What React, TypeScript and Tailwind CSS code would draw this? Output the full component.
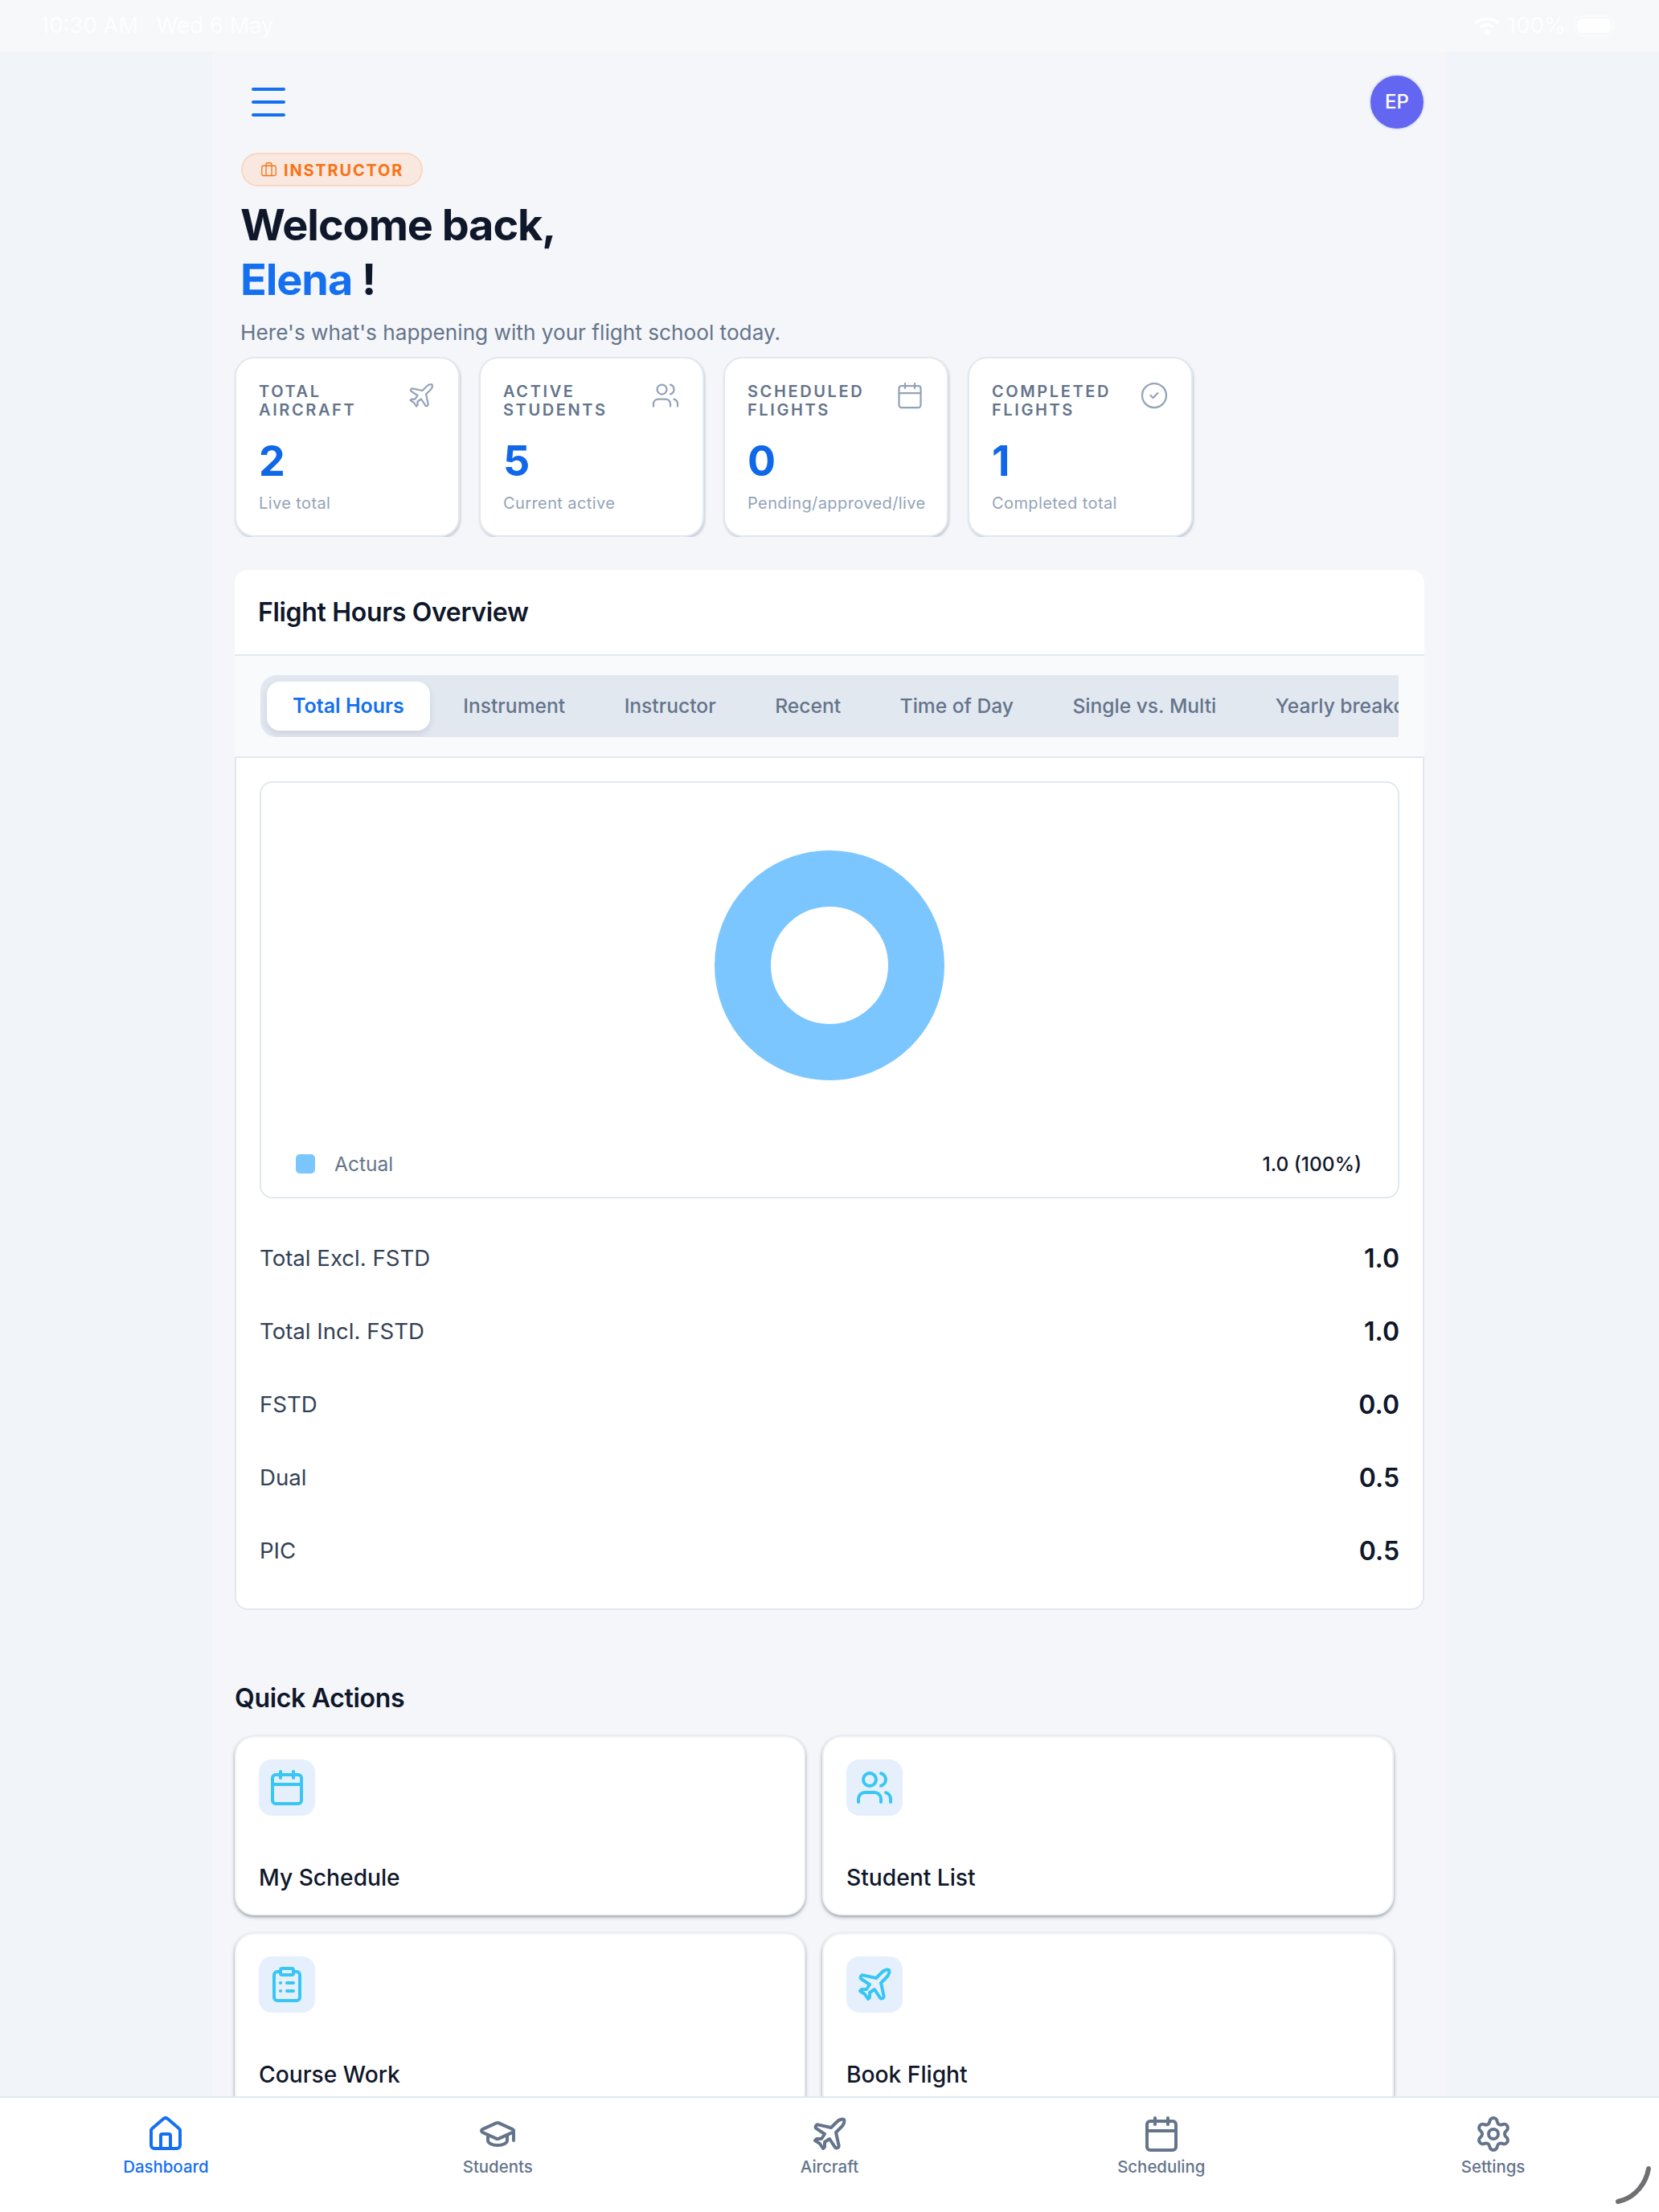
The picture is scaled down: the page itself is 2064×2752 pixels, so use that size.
import { Briefcase, Calendar, CircleCheck, ClipboardList, GraduationCap, House, Plane, Settings, Users } from "lucide-react";

const font = { fontFamily: "Inter, 'Noto Sans', sans-serif" };

const stats = [
  { l1: "TOTAL", l2: "AIRCRAFT", v: "2", s: "Live total", I: Plane },
  { l1: "ACTIVE", l2: "STUDENTS", v: "5", s: "Current active", I: Users },
  { l1: "SCHEDULED", l2: "FLIGHTS", v: "0", s: "Pending/approved/live", I: Calendar },
  { l1: "COMPLETED", l2: "FLIGHTS", v: "1", s: "Completed total", I: CircleCheck },
];

const tabs = ["Instrument", "Instructor", "Recent", "Time of Day", "Single vs. Multi", "Yearly breakdown"];

const rows = [
  ["Total Excl. FSTD", "1.0"],
  ["Total Incl. FSTD", "1.0"],
  ["FSTD", "0.0"],
  ["Dual", "0.5"],
  ["PIC", "0.5"],
];

const actions = [
  { t: "My Schedule", I: Calendar },
  { t: "Student List", I: Users },
  { t: "Course Work", I: ClipboardList },
  { t: "Book Flight", I: Plane },
];

const nav = [
  { t: "Dashboard", I: House, on: true },
  { t: "Students", I: GraduationCap, on: false },
  { t: "Aircraft", I: Plane, on: false },
  { t: "Scheduling", I: Calendar, on: false },
  { t: "Settings", I: Settings, on: false },
];

export default function App() {
  return (
    <div style={font} className="w-[2064px] h-[2752px] flex flex-col overflow-hidden bg-[#f1f4f9] relative">
      <div className="h-[64px] shrink-0 bg-[#f7f8fa] flex items-center justify-between pl-[50px] pr-[56px] text-white text-[27.5px] leading-none">
        <div className="flex gap-[22px] opacity-90">
          <span>10:30 AM</span>
          <span>Wed 6 May</span>
        </div>
        <div className="flex items-center gap-[10px] opacity-90">
          <svg width="30" height="24" viewBox="0 0 30 24" fill="none" stroke="#ffffff" strokeWidth="4" strokeLinecap="round">
            <path d="M2 8c7-6 19-6 26 0" />
            <path d="M8 13c4-3 10-3 14 0" />
            <circle cx="15" cy="20" r="1.5" fill="#ffffff" />
          </svg>
          <span>100%</span>
          <div className="w-[50px] h-[26px] rounded-[9px] border-2 border-white/50 p-[2px]">
            <div className="w-full h-full rounded-[6px] bg-white" />
          </div>
        </div>
      </div>

      <div className="flex-1 min-h-0 overflow-hidden">
        <div className="w-[1536px] mx-auto bg-[#f5f6f9] px-[28px] pt-[28px] h-full">
          <div className="flex items-center justify-between h-[70px] pl-[20px]">
            <svg width="44" height="36" viewBox="0 0 44 36" fill="none" stroke="#1570ef" strokeWidth="4" strokeLinecap="round">
              <path d="M3 2h38M3 18h38M3 34h38" />
            </svg>
            <div className="w-[70px] h-[70px] mr-[-1px] rounded-full bg-[#6366f1] border-2 border-[#e2e8f0] flex items-center justify-center text-white text-[24px] font-medium">
              EP
            </div>
          </div>

          <div className="pl-[8px]">
            <div className="mt-[28px] w-[226px] h-[42px] rounded-full bg-[#f8e8e0] border-2 border-[#fad7c0] flex items-center pl-[22px] gap-[8px]">
              <Briefcase size={21} strokeWidth={1.5} className="text-[#f97316]" />
              <span className="text-[#f97316] text-[20px] font-bold tracking-[0.09em] leading-none mt-[2px]">INSTRUCTOR</span>
            </div>
            <h1 className="mt-[14px] -ml-[1px] text-[54px] leading-[68px] font-bold tracking-[-0.02em] text-[#0f172a]">
              Welcome back,
              <br />
              <span className="text-[#1570ef]">Elena</span> !
            </h1>
            <p className="mt-[12px] -ml-[1px] text-[26.2px] leading-[40px] text-[#64748b]">Here's what's happening with your flight school today.</p>
          </div>

          <div className="-ml-[6px] pl-[6px] -mt-[2px] pt-[12px] pr-[6px] overflow-hidden flex gap-[24px] h-[236px] items-start">
            {stats.map((c) => (
              <div key={c.l1} className="w-[280px] h-[224px] shrink-0 rounded-[24px] bg-white border-2 border-[#e2e8f0] shadow-[1px_2px_3px_rgba(100,116,139,0.35)] px-[28px] pt-[30px]">
                <div className="flex justify-between items-start">
                  <div className="text-[20px] leading-[23px] font-semibold tracking-[0.13em] text-[#64748b]">
                    {c.l1}
                    <br />
                    {c.l2}
                  </div>
                  <c.I size={36} strokeWidth={1.5} className="text-[#94a3b8] -mt-[2px] shrink-0" />
                </div>
                <div className="mt-[20px] text-[52px] leading-[64px] font-bold text-[#1068e8]">{c.v}</div>
                <div className="mt-[6px] text-[20px] leading-[28px] tracking-[0.02em] text-[#94a3b8]">{c.s}</div>
              </div>
            ))}
          </div>

          <div className="mt-[41px] rounded-[16px] bg-white">
            <div className="h-[107px] border-b-2 border-[#e2e8f0] flex items-center pl-[29px]">
              <h2 className="text-[32px] font-semibold text-[#0f172a] tracking-[-0.01em]">Flight Hours Overview</h2>
            </div>
            <div className="h-[127px] border-b-2 border-[#e2e8f0] bg-[#f8fafc] px-[32px] pt-[24px]">
              <div className="h-[77px] bg-[#e2e8f0] rounded-l-[20px] flex items-center gap-[9.5px] pl-[8px] overflow-hidden">
                <div className="h-[61px] shrink-0 rounded-[16px] bg-white px-[32px] flex items-center text-[25px] font-semibold text-[#1570ef] shadow-[0_4px_10px_rgba(15,23,42,0.1)]">
                  Total Hours
                </div>
                {tabs.map((t) => (
                  <div key={t} className="h-[61px] shrink-0 px-[32px] flex items-center text-[24.6px] font-medium text-[#64748b]">
                    {t}
                  </div>
                ))}
              </div>
            </div>
            <div className="border-2 border-t-0 border-[#e2e8f0] rounded-b-[16px] px-[29px] pt-[29px] pb-[26px]">
              <div className="h-[519px] rounded-[16px] border-2 border-[#e2e8f0] flex flex-col pt-[84px]">
                <svg width="286" height="286" viewBox="0 0 286 286" className="self-center shrink-0">
                  <circle cx="143" cy="143" r="108" fill="none" stroke="#7cc6ff" strokeWidth="70" />
                </svg>
                <div className="mt-[89px] h-[30px] flex items-center justify-between pl-[43px] pr-[45px] text-[24.5px]">
                  <div className="flex items-center gap-[24px] text-[#64748b]">
                    <span className="w-[24px] h-[24px] rounded-[5px] bg-[#7cc6ff]" />
                    <span>Actual</span>
                  </div>
                  <span className="font-medium text-[#0f172a]">1.0 (100%)</span>
                </div>
              </div>
              <div className="mt-[29px]">
                {rows.map(([a, b]) => (
                  <div key={a} className="h-[91px] flex items-center justify-between">
                    <span className="text-[27.6px] text-[#334155]">{a}</span>
                    <span className="text-[32px] font-semibold text-[#0f172a]">{b}</span>
                  </div>
                ))}
              </div>
            </div>
          </div>

          <h2 className="mt-[88px] text-[32px] leading-[44px] font-semibold text-[#0f172a] tracking-[-0.01em]">Quick Actions</h2>
          <div className="mt-[25px] grid grid-cols-[710px_711px] gap-x-[21px] gap-y-[22px]">
            {actions.map((a) => (
              <div key={a.t} className="h-[223px] rounded-[24px] bg-white border-2 border-[#f1f5f9] shadow-[0_2px_4px_rgba(51,65,85,0.5)] px-[28px] pt-[27px]">
                <div className="w-[70px] h-[70px] rounded-[16px] bg-[#e6f0fd] flex items-center justify-center">
                  <a.I size={48} strokeWidth={2} className="text-[#38c6f4]" />
                </div>
                <div className="mt-[57px] text-[28.2px] leading-[40px] font-medium text-[#0f172a]">{a.t}</div>
              </div>
            ))}
          </div>
        </div>
      </div>

      <nav className="h-[144px] shrink-0 bg-white border-t-2 border-[#e2e8f0] grid grid-cols-5 relative">
        {nav.map((n) => (
          <div key={n.t} className={n.on ? "flex flex-col items-center pt-[21px] text-[#1570ef]" : "flex flex-col items-center pt-[21px] text-[#64748b]"}>
            <n.I size={48} strokeWidth={2} />
            <span className="mt-[3px] text-[20.4px] leading-[28px] font-medium">{n.t}</span>
          </div>
        ))}
        <svg width="48" height="50" viewBox="0 0 48 50" fill="none" stroke="#707072" strokeWidth="6" strokeLinecap="round" className="absolute right-[8px] bottom-[8px]">
          <path d="M43 4c-3 18-16 36-38 41" />
        </svg>
      </nav>
    </div>
  );
}
